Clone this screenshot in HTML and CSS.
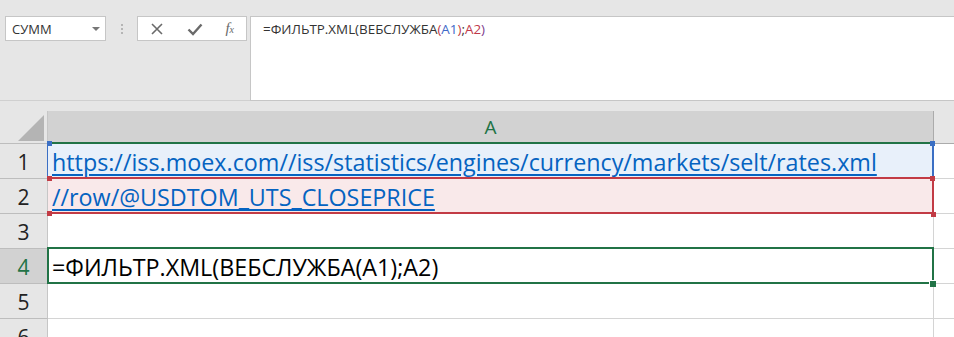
FILE: index.html
```html
<!DOCTYPE html>
<html lang="ru">
<head>
    <meta charset="UTF-8">
    <title>ФИЛЬТР.XML</title>
    <link rel="stylesheet" href="styles.css">
</head>
<body>
    <div class="toolbar">
        <div class="namebox">
            <span>СУММ</span>
            <span class="caret"></span>
        </div>
        <div class="grip"><i></i><i></i><i></i></div>
        <div class="fx-buttons">
            <svg width="14" height="14" viewBox="0 0 14 14"><path d="M2 2 L12 12 M12 2 L2 12" stroke="#6a6a6a" stroke-width="1.6" fill="none"/></svg>
            <svg width="16" height="14" viewBox="0 0 16 14"><path d="M1.5 7.5 L6 12 L14.5 2.5" stroke="#6a6a6a" stroke-width="2.4" fill="none"/></svg>
            <span class="fx"><i>f</i><small>x</small></span>
        </div>
        <div class="formula">=ФИЛЬТР.XML(ВЕБСЛУЖБА<span class="ref-red">(</span><span class="ref-blue">A1</span><span class="ref-red">)</span>;<span class="ref-red">A2</span><span class="ref-purple">)</span></div>
    </div>

    <div class="sheet">
        <div class="corner"><span class="tri"></span></div>
        <div class="col-head">A</div>
        <div class="col-rest"></div>

        <div class="row-head">1</div>
        <div class="cell range-blue">
            <span class="link">https://iss.moex.com//iss/statistics/engines/currency/markets/selt/rates.xml</span>
            <span class="handle tl"></span><span class="handle tr"></span>
        </div>
        <div class="cell-rest"></div>

        <div class="row-head">2</div>
        <div class="cell range-red">
            <span class="link">//row/@USDTOM_UTS_CLOSEPRICE</span>
            <span class="handle tl"></span><span class="handle tr"></span>
            <span class="handle bl"></span><span class="handle br"></span>
        </div>
        <div class="cell-rest"></div>

        <div class="row-head">3</div>
        <div class="cell"></div>
        <div class="cell-rest"></div>

        <div class="row-head active">4</div>
        <div class="cell selected">=ФИЛЬТР.XML(ВЕБСЛУЖБА(A1);A2)<span class="handle br"></span></div>
        <div class="cell-rest"></div>

        <div class="row-head">5</div>
        <div class="cell"></div>
        <div class="cell-rest"></div>

        <div class="row-head">6</div>
        <div class="cell"></div>
        <div class="cell-rest"></div>
    </div>
</body>
</html>
```

FILE: styles.css
```css
body {
    margin: 0;
    background: #e6e6e6;
    font-family: "Open Sans", "Liberation Sans", sans-serif;
    overflow: hidden;
}

/* formula bar */
.toolbar {
    display: flex;
    align-items: flex-start;
    height: 101px;
    padding-top: 16px;
    box-sizing: border-box;
    border-bottom: 1px solid #d0d0d0;
    margin-bottom: 10px;
}
.namebox {
    margin-left: 5px;
    width: 101px;
    height: 25px;
    box-sizing: border-box;
    border: 1px solid #c6c6c6;
    background: #fff;
    display: flex;
    align-items: center;
    justify-content: space-between;
    padding: 0 5px 0 6px;
    font-size: 13px;
    color: #333;
}
.caret {
    width: 0;
    height: 0;
    border-left: 4px solid transparent;
    border-right: 4px solid transparent;
    border-top: 4px solid #777;
}
.grip {
    width: 31px;
    height: 25px;
    display: flex;
    flex-direction: column;
    align-items: center;
    justify-content: center;
    gap: 2px;
}
.grip i {
    width: 2px;
    height: 2px;
    background: #b5b5b5;
}
.fx-buttons {
    width: 110px;
    height: 25px;
    box-sizing: border-box;
    border: 1px solid #c6c6c6;
    background: #fff;
    display: flex;
    align-items: center;
    justify-content: space-between;
    padding: 0 12px 0 12px;
}
.fx {
    font-family: "Liberation Serif", serif;
    font-size: 15px;
    color: #6a6a6a;
    font-style: italic;
}
.fx small {
    font-size: 10px;
}
.formula {
    flex: 1;
    margin-left: 3px;
    height: 85px;
    box-sizing: border-box;
    border: 1px solid #c6c6c6;
    border-right: none;
    background: #fff;
    padding: 3px 0 0 12px;
    font-size: 13.4px;
    color: #333;
}
.ref-blue { color: #4169c8; }
.ref-red { color: #c0394a; }
.ref-purple { color: #7a3b8c; }

/* grid */
.sheet {
    display: grid;
    grid-template-columns: 48px 886px 1fr;
    grid-template-rows: 33px repeat(6, 35px);
    font-family: "Open Sans", "Liberation Sans", sans-serif;
}
.corner {
    position: relative;
    background: #e6e6e6;
    border-right: 1px solid #c6c6c6;
    border-bottom: 1px solid #bdbdbd;
}
.tri {
    position: absolute;
    right: 3px;
    bottom: 2px;
    width: 0;
    height: 0;
    border-left: 26px solid transparent;
    border-bottom: 26px solid #b4b4b4;
}
.col-head {
    background: #d2d2d2;
    border-right: 1px solid #ababab;
    border-bottom: 2px solid #217346;
    color: #217346;
    font-size: 19px;
    display: flex;
    align-items: center;
    justify-content: center;
}
.col-rest {
    background: #e6e6e6;
    border-bottom: 1px solid #ababab;
}
.row-head {
    background: #e6e6e6;
    border-right: 1px solid #c6c6c6;
    border-bottom: 1px solid #bdbdbd;
    font-size: 21px;
    color: #222;
    display: flex;
    align-items: center;
    justify-content: center;
    padding-top: 1px;
}
.row-head.active {
    background: #d2d2d2;
    color: #217346;
}
.cell {
    position: relative;
    background: #fff;
    border-right: 1px solid #d4d4d4;
    border-bottom: 1px solid #d4d4d4;
    font-size: 23.3px;
    padding: 1px 0 0 4px;
    display: flex;
    align-items: center;
    white-space: nowrap;
    color: #000;
}
.cell-rest {
    background: #fff;
    border-bottom: 1px solid #d4d4d4;
}
.link {
    color: #0563c1;
    text-decoration: underline;
    text-underline-offset: 3px;
    text-decoration-thickness: 2px;
}
.range-blue {
    background: #e8f0fa;
}
.range-red {
    background: #f9e9ea;
}
.range-blue::after,
.range-red::after,
.selected::after {
    content: "";
    position: absolute;
    left: -1px;
    top: -2px;
    right: -1px;
    bottom: -1px;
    border: 2px solid #3b6fc4;
    pointer-events: none;
}
.range-blue::after {
    border-top: none;
    border-left-width: 1px;
}
.range-red::after {
    border-color: #c23b45;
    border-left: none;
}
.selected::after {
    border-color: #217346;
}

/* corner handles of the range borders */
.handle {
    position: absolute;
    width: 5px;
    height: 5px;
    background: #3b6fc4;
    z-index: 2;
}
.range-red .handle {
    background: #c23b45;
}
.selected .handle {
    background: #217346;
    width: 6px;
    height: 6px;
    border-left: 1px solid #fff;
    border-top: 1px solid #fff;
}
.handle.tl { left: -1px; top: -3px; }
.handle.tr { right: -2px; top: -3px; }
.handle.bl { left: -1px; bottom: -3px; }
.handle.br { right: -3px; bottom: -4px; }
```
